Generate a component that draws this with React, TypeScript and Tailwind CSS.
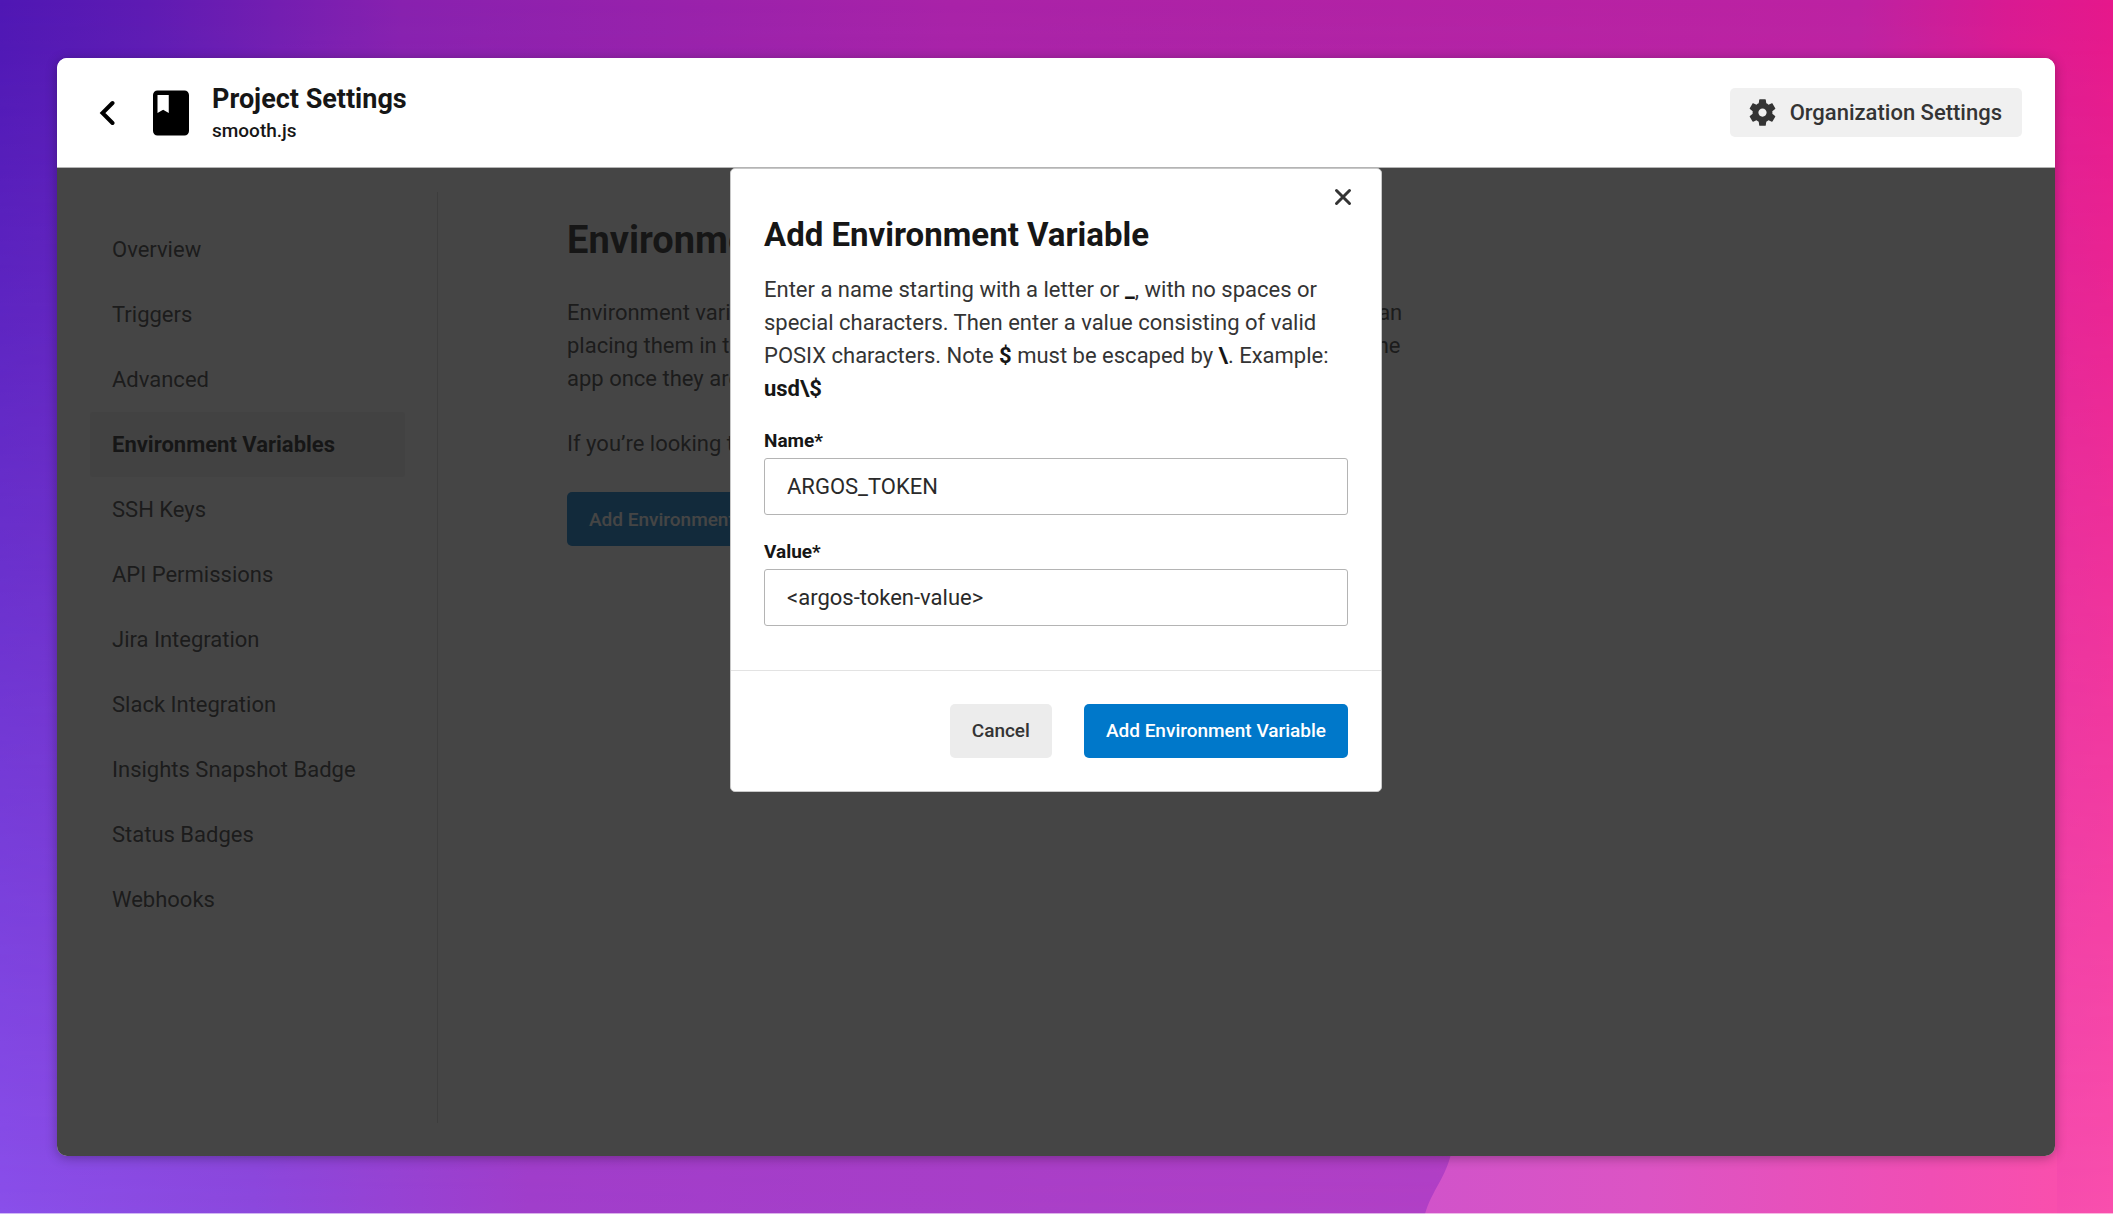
import React from "react";

const NAV_ITEMS = [
  "Overview",
  "Triggers",
  "Advanced",
  "Environment Variables",
  "SSH Keys",
  "API Permissions",
  "Jira Integration",
  "Slack Integration",
  "Insights Snapshot Badge",
  "Status Badges",
  "Webhooks",
];

function Backdrop() {
  return (
    <svg
      className="absolute inset-0 h-full w-full"
      viewBox="0 0 2113 1214"
      preserveAspectRatio="none"
      aria-hidden="true"
    >
      <defs>
        <linearGradient id="top" x1="0" y1="0" x2="1" y2="0">
          <stop offset="0" stopColor="#4f17b4" />
          <stop offset="0.07" stopColor="#5e1bb3" />
          <stop offset="0.19" stopColor="#8821af" />
          <stop offset="0.45" stopColor="#a923a8" />
          <stop offset="0.88" stopColor="#bd22a2" />
          <stop offset="0.95" stopColor="#d91a92" />
          <stop offset="1" stopColor="#e6188b" />
        </linearGradient>
        <linearGradient id="bottom" x1="0" y1="0" x2="1" y2="0">
          <stop offset="0" stopColor="#8a4fea" />
          <stop offset="0.12" stopColor="#8c48dd" />
          <stop offset="0.25" stopColor="#a03ecb" />
          <stop offset="0.68" stopColor="#b040c6" />
          <stop offset="0.95" stopColor="#f34bae" />
          <stop offset="1" stopColor="#f94fad" />
        </linearGradient>
        <linearGradient id="wedge" x1="0" y1="0" x2="1" y2="0">
          <stop offset="0" stopColor="#d153ca" />
          <stop offset="0.35" stopColor="#dc54c4" />
          <stop offset="0.8" stopColor="#f04eb4" />
          <stop offset="1" stopColor="#f94fad" />
        </linearGradient>
        <linearGradient id="fade" x1="0" y1="0" x2="0" y2="1">
          <stop offset="0" stopColor="#000" />
          <stop offset="0.2" stopColor="#333" />
          <stop offset="1" stopColor="#fff" />
        </linearGradient>
        <mask id="fadeMask">
          <rect width="2113" height="1214" fill="url(#fade)" />
        </mask>
      </defs>
      <rect width="2113" height="1214" fill="url(#top)" />
      <rect width="2113" height="1214" fill="url(#bottom)" mask="url(#fadeMask)" />
      <path d="M1425 1214C1432 1190 1446 1178 1452 1150L2057 1150V1214Z" fill="url(#wedge)" />
      <rect y="1213" width="2113" height="1" fill="#fff" fillOpacity="0.6" />
    </svg>
  );
}

function Header() {
  return (
    <header className="flex h-[110px] items-center justify-between border-b border-[#b4b4b4] bg-white pr-[33px] pl-8">
      <div className="flex items-center">
        <button type="button" aria-label="Back" className="flex h-9 w-9 items-center justify-center">
          <svg viewBox="0 0 16 26" className="h-[26px] w-4" fill="none" stroke="#000" strokeWidth="4" strokeLinecap="round">
            <path d="M13.500 3L3.500 13L13.500 23" />
          </svg>
        </button>
        <svg viewBox="0 0 24 24" className="ml-[19px] h-[54px] w-[54px]" fill="#000" aria-hidden="true">
          <path d="M18 2H6c-1.100 0-2 .9-2 2v16c0 1.100.9 2 2 2h12c1.100 0 2-.9 2-2V4c0-1.100-.9-2-2-2zM6 4h5v8l-2.500-1.500L6 12V4z" />
        </svg>
        <div className="ml-[14px] pt-1">
          <h1 className="text-[27px] leading-8 font-bold text-[#161616]">Project Settings</h1>
          <p className="text-[19px] leading-8 font-medium text-[#161616]">smooth.js</p>
        </div>
      </div>
      <button
        type="button"
        className="flex h-[49px] items-center gap-[11px] rounded-[5px] bg-[#f0f0f0] pr-5 pl-4 text-[22px] font-medium text-[#343434]"
      >
        <svg viewBox="0 0 24 24" className="h-[33px] w-[33px]" fill="currentColor" aria-hidden="true">
          <path d="M19.140 12.940c.04-.3.060-.61.060-.94 0-.32-.02-.64-.07-.94l2.030-1.580c.18-.14.230-.41.120-.61l-1.920-3.320c-.12-.22-.37-.29-.59-.22l-2.390.96c-.5-.38-1.030-.7-1.620-.94l-.36-2.540c-.04-.24-.24-.41-.48-.41h-3.840c-.24 0-.43.170-.47.410l-.36 2.540c-.59.240-1.130.570-1.620.940l-2.390-.96c-.22-.08-.47 0-.59.220L2.740 8.870c-.12.210-.08.470.120.610l2.030 1.580c-.05.300-.09.630-.09.940s.02.640.070.940l-2.030 1.580c-.18.140-.23.410-.12.610l1.920 3.320c.12.220.37.290.59.220l2.390-.96c.5.380 1.030.700 1.620.940l.36 2.540c.05.240.24.410.48.410h3.840c.24 0 .44-.17.470-.41l.36-2.540c.59-.24 1.130-.56 1.620-.94l2.390.96c.22.080.47 0 .59-.22l1.920-3.320c.12-.22.070-.47-.12-.61l-2.010-1.580zM12 15c-1.650 0-3-1.350-3-3s1.350-3 3-3 3 1.350 3 3-1.350 3-3 3z" />
        </svg>
        Organization Settings
      </button>
    </header>
  );
}

function Sidebar() {
  return (
    <nav aria-label="Project settings" className="mt-6 mb-[33px] w-[381px] shrink-0 border-r border-[#d8d8d8] pt-[25px] pr-8 pl-[33px]">
      {NAV_ITEMS.map((item) => (
        <a
          key={item}
          href="#"
          className={
            item === "Environment Variables"
              ? "flex h-[65px] items-center rounded-xs bg-[#f0f0f0] pl-[22px] text-[22px] font-bold text-[#161616]"
              : "flex h-[65px] items-center pl-[22px] text-[22px] text-[#343434]"
          }
        >
          {item}
        </a>
      ))}
    </nav>
  );
}

function Content() {
  return (
    <main className="flex-1 pt-12 pl-[129px] text-[22px] leading-[33px] text-[#343434]">
      <h2 className="text-[38px] leading-[48px] font-bold text-[#161616]">Environment Variables</h2>
      <p className="mt-8">
        Environment variables let you add sensitive data (eg API keys) to your jobs rather than
        <br />
        placing them in the repository. The value of the variables can’t be seen or edited in the
        <br />
        app once they are set.
      </p>
      <p className="mt-8">If you’re looking to share environment variables across projects, try Contexts.</p>
      <button
        type="button"
        className="mt-8 h-[54px] rounded-[5px] bg-[#0078ca] px-[22px] text-[19px] font-medium text-white"
      >
        Add Environment Variable
      </button>
    </main>
  );
}

function Field({ id, label, value }: { id: string; label: string; value: string }) {
  return (
    <div className="flex flex-col">
      <label htmlFor={id} className="mb-[3px] text-[19px] leading-7 font-bold text-[#161616]">
        {label}
      </label>
      <input
        id={id}
        type="text"
        defaultValue={value}
        className="h-[57px] rounded-[3px] border border-[#b4b4b4] bg-white px-[22px] text-[22px] text-[#2a2a2a] outline-none"
      />
    </div>
  );
}

function Dialog() {
  return (
    <div role="dialog" aria-labelledby="dialog-title" className="relative w-[652px] rounded-[5px] border border-[#c8c8c8] bg-white">
      <button
        type="button"
        aria-label="Close"
        className="absolute top-3 right-[22px] flex h-8 w-8 items-center justify-center"
      >
        <svg viewBox="0 0 18 18" className="h-[18px] w-[18px]" fill="none" stroke="#343434" strokeWidth="3" strokeLinecap="round">
          <path d="M2.500 2.500L15.500 15.500M15.500 2.500L2.500 15.500" />
        </svg>
      </button>
      <div className="px-[33px] pt-11 pb-11">
        <h2 id="dialog-title" className="text-[33px] leading-[44px] font-bold text-[#161616]">
          Add Environment Variable
        </h2>
        <p className="mt-4 mb-[22px] text-[22px] leading-[33px] text-[#343434]">
          Enter a name starting with a letter or <b className="text-[#161616]">_</b>, with no spaces or special
          characters. Then enter a value consisting of valid POSIX characters. Note{" "}
          <b className="text-[#161616]">$</b> must be escaped by <b className="text-[#161616]">\</b>. Example:{" "}
          <b className="text-[#161616]">usd\$</b>
        </p>
        <div className="flex flex-col gap-[23px]">
          <Field id="var-name" label="Name*" value="ARGOS_TOKEN" />
          <Field id="var-value" label="Value*" value="<argos-token-value>" />
        </div>
      </div>
      <div className="flex justify-end gap-8 border-t border-[#e3e3e3] px-[33px] py-[33px] text-[19px] font-medium">
        <button type="button" className="h-[54px] rounded-[5px] bg-[#ececec] px-[22px] text-[#343434]">
          Cancel
        </button>
        <button type="button" className="h-[54px] rounded-[5px] bg-[#0078ca] px-[22px] text-white">
          Add Environment Variable
        </button>
      </div>
    </div>
  );
}

export default function App() {
  return (
    <div className="relative flex min-h-screen flex-col pt-[58px] pr-[58px] pb-[58px] pl-[57px] font-['Roboto',sans-serif]">
      <Backdrop />
      <div className="relative flex flex-1 flex-col overflow-hidden rounded-[10px] bg-white shadow-[0_2px_12px_rgba(0,0,0,0.3)]">
        <Header />
        <div className="relative flex flex-1">
          <Sidebar />
          <Content />
          <div className="absolute inset-0 flex items-start justify-center bg-[#161616]/80">
            <Dialog />
          </div>
        </div>
      </div>
    </div>
  );
}
